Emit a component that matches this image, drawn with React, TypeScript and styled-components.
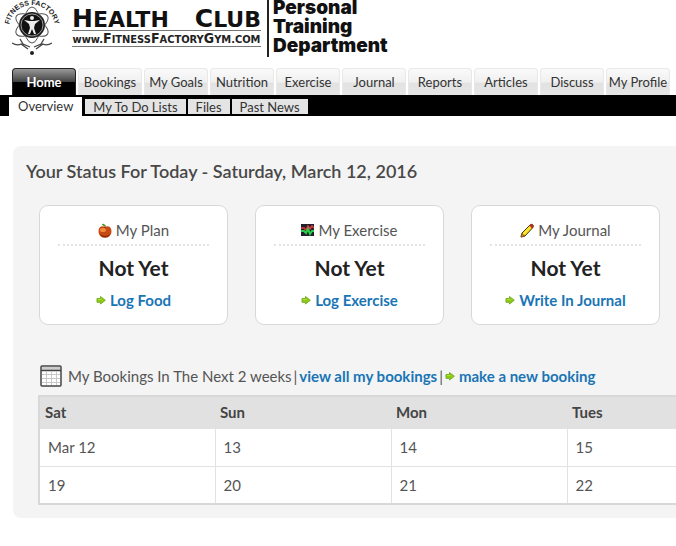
import React from "react";
import styled, { createGlobalStyle, css } from "styled-components";

const GlobalStyle = createGlobalStyle`
  *, *::before, *::after { box-sizing: border-box; }
  body {
    margin: 0;
    background: #fff;
    color: #555;
    font-family: Lato, "Open Sans", sans-serif;
    font-size: 15px;
    line-height: 20px;
    overflow-x: hidden;
  }
  svg { display: block; flex: none; }
`;

const Page = styled.div`
  overflow: hidden;
`;

const Header = styled.header`
  display: flex;
  align-items: flex-end;
  height: 57px;
  color: #111;
`;

const Brand = styled.div`
  display: flex;
  flex-direction: column;
  width: 189px;
  margin-left: 8px;
  padding-bottom: 10px;
`;

const BrandName = styled.div`
  display: flex;
  justify-content: space-between;
  font-family: "DejaVu Sans", sans-serif;
  font-size: 22px;
  font-weight: 700;
  line-height: 21px;
`;

const Initial = styled.span`
  font-size: 25px;
`;

const BrandSite = styled.a`
  display: flex;
  align-items: baseline;
  justify-content: center;
  height: 17px;
  border: solid #777;
  border-width: 1px 0;
  color: #222;
  font-family: "Liberation Sans Narrow", "DejaVu Sans Condensed", sans-serif;
  font-size: 11px;
  font-weight: 700;
  line-height: 14px;
  text-decoration: none;
`;

const SiteInitial = styled.span`
  font-size: 14px;
`;

const Department = styled.div`
  align-self: stretch;
  display: flex;
  align-items: flex-end;
  margin-left: 6px;
  padding: 0 0 2px 4px;
  border-left: 2px solid #222;
  font-family: Inter, sans-serif;
  font-size: 19px;
  font-weight: 900;
  line-height: 19px;
`;

const Tabs = styled.nav`
  display: flex;
  gap: 2px;
  padding: 11px 7px 0 12px;
`;

const Tab = styled.a<{ $active?: boolean }>`
  flex: 0 0 64px;
  height: 27px;
  border: 1px solid #e8e8e8;
  border-bottom: 0;
  border-radius: 4px 4px 0 0;
  background: linear-gradient(#fafafa 0%, #f0f0f0 50%, #e2e2e2 55%, #e6e6e6 100%);
  color: #333;
  font-size: 13px;
  line-height: 26px;
  text-align: center;
  text-decoration: none;
  white-space: nowrap;
  ${(p) =>
    p.$active &&
    css`
      border-color: #222;
      background: linear-gradient(#999 0%, #444 48%, #000 52%, #000 100%);
      color: #fff;
      font-weight: 700;
    `}
`;

const SubBar = styled.nav`
  display: flex;
  align-items: flex-end;
  gap: 2px;
  height: 21px;
  padding-left: 9px;
  background: #000;
`;

const SubTab = styled.a<{ $active?: boolean }>`
  height: 15px;
  margin-bottom: 2px;
  padding: 0 8px;
  background: #e4e4e4;
  color: #333;
  font-size: 13px;
  line-height: 16px;
  text-decoration: none;
  white-space: nowrap;
  ${(p) =>
    p.$active &&
    css`
      height: 19px;
      margin: 0 1px 0 0;
      padding: 0 9px;
      background: #fff;
      line-height: 19px;
    `}
`;

const Panel = styled.main`
  margin: 30px 0 28px 13px;
  padding: 13px 0 13px 13px;
  border-radius: 8px 0 0 8px;
  background: #f4f4f4;
  overflow: hidden;
`;

const Heading = styled.h1`
  margin: 0;
  color: #484848;
  font-size: 18px;
  font-weight: 600;
  line-height: 24px;
`;

const Cards = styled.section`
  display: flex;
  gap: 27px;
  padding: 22px 0 0 13px;
`;

const Card = styled.article`
  display: flex;
  flex: 0 0 189px;
  flex-direction: column;
  height: 120px;
  padding: 14px 18px 0;
  border: 1px solid #d8d8d8;
  border-radius: 9px;
  background: #fff;
  text-align: center;
`;

const CardTitle = styled.h2`
  display: flex;
  align-items: center;
  justify-content: center;
  gap: 4px;
  margin: 0;
  padding-bottom: 4px;
  border-bottom: 2px dotted #e4e4e4;
  font-size: 15px;
  font-weight: 400;
  line-height: 20px;
`;

const CardState = styled.p`
  margin: 0;
  padding: 10px 0 10px;
  color: #222;
  font-size: 21px;
  font-weight: 700;
  line-height: 24px;
`;

const ActionLink = styled.a`
  display: inline-flex;
  align-items: center;
  justify-content: center;
  gap: 4px;
  color: #1a75b5;
  font-weight: 700;
  text-decoration: none;
  white-space: nowrap;
`;

const Bookings = styled.section`
  padding: 40px 0 0 12px;
`;

const BookingsBar = styled.div`
  display: flex;
  align-items: center;
  gap: 2px;
  padding: 0 0 8px 2px;
  white-space: nowrap;
`;

const BookingsTitle = styled.h2`
  margin: 0 0 0 4px;
  font-size: 15px;
  font-weight: 400;
`;

const Calendar = styled.table`
  width: 100%;
  border: 2px solid #d8d8d8;
  border-right: 0;
  border-collapse: collapse;
  table-layout: fixed;
  background: #fff;
`;

const DayHead = styled.th`
  width: 176px;
  height: 32px;
  padding: 0 5px;
  background: #e1e1e1;
  color: #444;
  font-weight: 700;
  text-align: left;

  &:last-child {
    width: auto;
  }
`;

const DayCell = styled.td`
  height: 38px;
  padding: 0 8px;
  border: 1px solid #e2e2e2;

  &:last-child {
    border-right: 0;
  }
`;

function Emblem() {
  return (
    <svg width="64" height="57" viewBox="0 0 64 57" aria-hidden="true">
      <defs>
        <path id="ring" d="M9 28 A23 23 0 0 1 55 28" />
      </defs>
      <text fontFamily="Liberation Sans" fontSize="7" fontWeight="700" fill="#222">
        <textPath href="#ring" startOffset="50%" textAnchor="middle">FITNESS FACTORY</textPath>
      </text>
      <g fill="none" stroke="#555" strokeWidth="1">
        <ellipse cx="32" cy="25" rx="8" ry="18" />
        <ellipse cx="32" cy="25" rx="8" ry="18" transform="rotate(60 32 25)" />
        <ellipse cx="32" cy="25" rx="8" ry="18" transform="rotate(120 32 25)" />
      </g>
      <circle cx="32" cy="25" r="13" fill="#222" />
      <circle cx="32" cy="25" r="11" fill="#111" stroke="#999" />
      <circle cx="32" cy="18" r="2" fill="#eee" />
      <path d="M24 20 L30 21 H34 L40 20 L35 24 L34 28 L36 34 H34 L32 29 L30 34 H28 L30 28 L29 24 Z" fill="#eee" />
      <path d="M12 43 Q17 46 21 44 L28 49 M52 43 Q47 46 43 44 L36 49 M20 39 L23 44 L30 47 M44 39 L41 44 L34 47" fill="none" stroke="#444" strokeWidth="1.300" />
      <circle cx="32" cy="53" r="2" fill="#222" />
    </svg>
  );
}

function Arrow() {
  return (
    <svg width="10" height="10" viewBox="0 0 10 10" aria-hidden="true">
      <path d="M1 3.500 H4.500 V1.500 L9.300 5.300 L4.500 9 V7.300 H1 Z" fill="#8fca12" stroke="#78ae2a" strokeLinejoin="round" />
      <path d="M2 4.500 H5.500" stroke="#b4e03c" />
    </svg>
  );
}

function Apple() {
  return (
    <svg width="14" height="15" viewBox="0 0 14 15" aria-hidden="true">
      <path d="M7 4 C4 2 .5 4 .5 8 C.5 12 3 14.500 5.500 14.500 H8.500 C11 14.500 13.500 12 13.500 8 C13.500 4 10 2 7 4 Z" fill="#c64a12" />
      <ellipse cx="5" cy="7" rx="3" ry="2" fill="#f08a3c" />
      <path d="M2 11 Q7 15 12 11 Q10 14.500 7 14.500 Q4 14.500 2 11 Z" fill="#8a260a" />
      <path d="M7 5 V2" stroke="#5b3a12" />
      <path d="M7 3 Q4 3 4 1 Q7 0 7 3 Z" fill="#4f9a1c" />
    </svg>
  );
}

function Pulse() {
  return (
    <svg width="13" height="12" viewBox="0 0 13 12" aria-hidden="true">
      <rect width="13" height="12" fill="#23202c" />
      <path d="M0 4 H3 L5 6 L7 2 L9 5 L11 2 L13 4" fill="none" stroke="#e23b3f" strokeWidth="1.500" />
      <path d="M0 7 H3 L5 9 L7 5 L9 10 L11 7 H13" fill="none" stroke="#25cf4a" strokeWidth="2" />
    </svg>
  );
}

function Pencil() {
  return (
    <svg width="14" height="15" viewBox="0 0 14 15" aria-hidden="true">
      <path d="M1 14 L2 10 L10 2 Q12 .5 13 2 Q14 3.500 12.500 5 L5 13 Z" fill="#f7dc16" stroke="#4a3a10" strokeLinejoin="round" />
      <path d="M9.500 2.500 Q12 .5 13 2 Q14 3.500 12 5.500 Z" fill="#c9202c" />
      <path d="M1 14 L2 10.500 L4.800 13 Z" fill="#d8862c" stroke="#6a3a10" strokeWidth=".5" />
      <path d="M4 10.500 L10 4.500" stroke="#fff27a" />
    </svg>
  );
}

function CalendarIcon() {
  return (
    <svg width="22" height="22" viewBox="0 0 22 22" aria-hidden="true">
      <rect x="1" y="1" width="20" height="20" rx="1" fill="#fff" stroke="#444" strokeWidth="1.500" />
      <rect x="2" y="2" width="18" height="3" fill="#ccc" />
      <path d="M1 5.500 H21" stroke="#444" strokeWidth="1.500" />
      <path d="M6.500 6 V20 M11.500 6 V20 M16.500 6 V20 M2 9.500 H20 M2 13.500 H20 M2 17.500 H20" stroke="#c8c8c8" />
    </svg>
  );
}

const tabs = ["Home", "Bookings", "My Goals", "Nutrition", "Exercise", "Journal", "Reports", "Articles", "Discuss", "My Profile"];
const subTabs = ["Overview", "My To Do Lists", "Files", "Past News"];
const cards = [
  { title: "My Plan", icon: <Apple />, action: "Log Food" },
  { title: "My Exercise", icon: <Pulse />, action: "Log Exercise" },
  { title: "My Journal", icon: <Pencil />, action: "Write In Journal" },
];
const days = ["Sat", "Sun", "Mon", "Tues"];
const weeks = [
  ["Mar 12", "13", "14", "15"],
  ["19", "20", "21", "22"],
];

export default function App() {
  return (
    <Page>
      <GlobalStyle />
      <Header>
        <Emblem />
        <Brand>
          <BrandName>
            <span><Initial>H</Initial>EALTH</span>
            <span><Initial>C</Initial>LUB</span>
          </BrandName>
          <BrandSite href="#site">
            <span>
              www.<SiteInitial>F</SiteInitial>ITNESS<SiteInitial>F</SiteInitial>ACTORY<SiteInitial>G</SiteInitial>YM.COM
            </span>
          </BrandSite>
        </Brand>
        <Department>
          <div>Personal<br />Training<br />Department</div>
        </Department>
      </Header>
      <Tabs aria-label="Main">
        {tabs.map((t, i) => (
          <Tab key={t} href="#" $active={i === 0}>{t}</Tab>
        ))}
      </Tabs>
      <SubBar aria-label="Home sections">
        {subTabs.map((t, i) => (
          <SubTab key={t} href="#" $active={i === 0}>{t}</SubTab>
        ))}
      </SubBar>
      <Panel>
        <Heading>Your Status For Today - Saturday, March 12, 2016</Heading>
        <Cards>
          {cards.map((c) => (
            <Card key={c.title}>
              <CardTitle>{c.icon}{c.title}</CardTitle>
              <CardState>Not Yet</CardState>
              <ActionLink href="#"><Arrow />{c.action}</ActionLink>
            </Card>
          ))}
        </Cards>
        <Bookings>
          <BookingsBar>
            <CalendarIcon />
            <BookingsTitle>My Bookings In The Next 2 weeks</BookingsTitle>
            <span>|</span>
            <ActionLink href="#">view all my bookings</ActionLink>
            <span>|</span>
            <ActionLink href="#"><Arrow />make a new booking</ActionLink>
          </BookingsBar>
          <Calendar>
            <thead>
              <tr>{days.map((d) => <DayHead key={d} scope="col">{d}</DayHead>)}</tr>
            </thead>
            <tbody>
              {weeks.map((w) => (
                <tr key={w[0]}>{w.map((d) => <DayCell key={d}>{d}</DayCell>)}</tr>
              ))}
            </tbody>
          </Calendar>
        </Bookings>
      </Panel>
    </Page>
  );
}
